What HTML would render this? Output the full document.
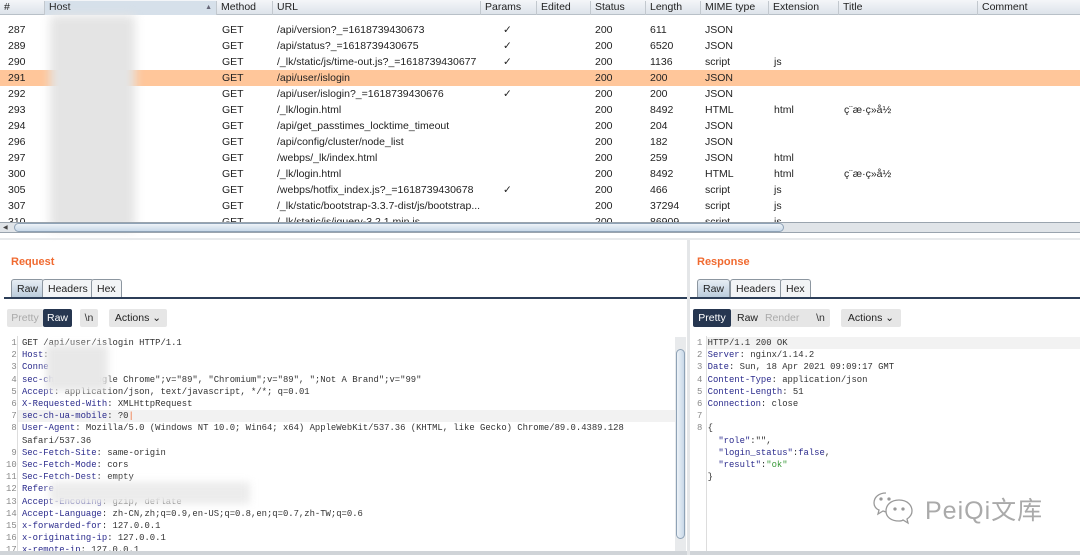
<!DOCTYPE html>
<html><head><meta charset="utf-8"><style>
*{margin:0;padding:0;box-sizing:border-box}
body{width:1080px;height:555px;overflow:hidden;background:#fff;font-family:"Liberation Sans",sans-serif;position:relative}
.abs{position:absolute}
.hdr{position:absolute;top:0;left:0;width:1080px;height:15px;background:linear-gradient(#f4f6f9,#dde3ea);border-bottom:1px solid #b8c0c8}
.hdr span{position:absolute;top:1px;font-size:10.5px;color:#222;height:14px;padding-left:4px;border-left:1px solid #c2c8ce}
.row{position:absolute;left:0;width:1080px;height:16px;font-size:10.5px;color:#222}
.row span{position:absolute;top:2px}
.hl{background:#ffc69a}
.code{position:absolute;font-family:"Liberation Mono",monospace;font-size:8.9px;line-height:12.2px;color:#333;white-space:pre}
.k{color:#2a2a8c}
.n{color:#888}
.btn{position:absolute;height:18px;font-size:10.5px;line-height:18px;text-align:center;border-radius:2px}
.tab{position:absolute;top:279px;height:19px;font-size:10.5px;line-height:18px;border:1px solid #8c96a0;border-bottom:none;border-radius:3px 3px 0 0;background:#f2f4f6;padding:0 5px;color:#222}
</style></head><body>
<div class="hdr">
<span style="left:0;border:none">#</span>
<span style="left:44px;width:172px;background:#d6e0ea">Host<i style="position:absolute;right:4px;top:3px;font-size:7px;font-style:normal;color:#667">▲</i></span>
<span style="left:216px">Method</span>
<span style="left:272px">URL</span>
<span style="left:480px">Params</span>
<span style="left:536px">Edited</span>
<span style="left:590px">Status</span>
<span style="left:645px">Length</span>
<span style="left:700px">MIME type</span>
<span style="left:768px">Extension</span>
<span style="left:838px">Title</span>
<span style="left:977px">Comment</span>
</div>
<div class="row" style="top:22px"><span style="left:8px">287</span><span style="left:222px">GET</span><span style="left:277px">/api/version?_=1618739430673</span><span style="left:503px">✓</span><span style="left:595px">200</span><span style="left:650px">611</span><span style="left:705px">JSON</span></div>
<div class="row" style="top:38px"><span style="left:8px">289</span><span style="left:222px">GET</span><span style="left:277px">/api/status?_=1618739430675</span><span style="left:503px">✓</span><span style="left:595px">200</span><span style="left:650px">6520</span><span style="left:705px">JSON</span></div>
<div class="row" style="top:54px"><span style="left:8px">290</span><span style="left:222px">GET</span><span style="left:277px">/_lk/static/js/time-out.js?_=1618739430677</span><span style="left:503px">✓</span><span style="left:595px">200</span><span style="left:650px">1136</span><span style="left:705px">script</span><span style="left:774px">js</span></div>
<div class="row hl" style="top:70px"><span style="left:8px">291</span><span style="left:222px">GET</span><span style="left:277px">/api/user/islogin</span><span style="left:595px">200</span><span style="left:650px">200</span><span style="left:705px">JSON</span></div>
<div class="row" style="top:86px"><span style="left:8px">292</span><span style="left:222px">GET</span><span style="left:277px">/api/user/islogin?_=1618739430676</span><span style="left:503px">✓</span><span style="left:595px">200</span><span style="left:650px">200</span><span style="left:705px">JSON</span></div>
<div class="row" style="top:102px"><span style="left:8px">293</span><span style="left:222px">GET</span><span style="left:277px">/_lk/login.html</span><span style="left:595px">200</span><span style="left:650px">8492</span><span style="left:705px">HTML</span><span style="left:774px">html</span><span style="left:844px">ç¨æ·ç»å½</span></div>
<div class="row" style="top:118px"><span style="left:8px">294</span><span style="left:222px">GET</span><span style="left:277px">/api/get_passtimes_locktime_timeout</span><span style="left:595px">200</span><span style="left:650px">204</span><span style="left:705px">JSON</span></div>
<div class="row" style="top:134px"><span style="left:8px">296</span><span style="left:222px">GET</span><span style="left:277px">/api/config/cluster/node_list</span><span style="left:595px">200</span><span style="left:650px">182</span><span style="left:705px">JSON</span></div>
<div class="row" style="top:150px"><span style="left:8px">297</span><span style="left:222px">GET</span><span style="left:277px">/webps/_lk/index.html</span><span style="left:595px">200</span><span style="left:650px">259</span><span style="left:705px">JSON</span><span style="left:774px">html</span></div>
<div class="row" style="top:166px"><span style="left:8px">300</span><span style="left:222px">GET</span><span style="left:277px">/_lk/login.html</span><span style="left:595px">200</span><span style="left:650px">8492</span><span style="left:705px">HTML</span><span style="left:774px">html</span><span style="left:844px">ç¨æ·ç»å½</span></div>
<div class="row" style="top:182px"><span style="left:8px">305</span><span style="left:222px">GET</span><span style="left:277px">/webps/hotfix_index.js?_=1618739430678</span><span style="left:503px">✓</span><span style="left:595px">200</span><span style="left:650px">466</span><span style="left:705px">script</span><span style="left:774px">js</span></div>
<div class="row" style="top:198px"><span style="left:8px">307</span><span style="left:222px">GET</span><span style="left:277px">/_lk/static/bootstrap-3.3.7-dist/js/bootstrap...</span><span style="left:595px">200</span><span style="left:650px">37294</span><span style="left:705px">script</span><span style="left:774px">js</span></div>
<div class="row" style="top:214px;height:8px;overflow:hidden"><span style="left:8px">310</span><span style="left:222px">GET</span><span style="left:277px">/_lk/static/js/jquery-3.2.1.min.js</span><span style="left:595px">200</span><span style="left:650px">86909</span><span style="left:705px">script</span><span style="left:774px">js</span></div>
<div class="abs" style="left:50px;top:15px;width:85px;height:215px;background:#e4e4e4;filter:blur(5px)"></div>
<div class="abs" style="left:0;top:222px;width:1080px;height:11px;background:#e0e4e8;border-top:1px solid #9aa4ae;border-bottom:1px solid #9aa4ae"></div>
<div class="abs" style="left:14px;top:223px;width:770px;height:9px;background:linear-gradient(#eef3f8,#c8d8e8);border:1px solid #8ea2b6;border-radius:5px"></div>
<div class="abs" style="left:3px;top:224px;font-size:6px;color:#444">◀</div>
<div class="abs" style="left:0;top:238px;width:1080px;height:2px;background:#e8eaec"></div>
<div class="abs" style="left:687px;top:240px;width:3px;height:315px;background:#e4e6e8"></div>

<!-- Request -->
<div class="abs" style="left:11px;top:256px;font-size:11px;font-weight:bold;color:#f06a30">Request</div>
<div class="tab" style="left:11px;background:linear-gradient(#e6edf4,#b8cadb)">Raw</div>
<div class="tab" style="left:42px">Headers</div>
<div class="tab" style="left:91px">Hex</div>
<div class="abs" style="left:4px;top:297px;width:683px;height:2px;background:#2c3e58"></div>
<div class="btn" style="left:7px;top:309px;width:36px;background:#e6e6e6;color:#aaa">Pretty</div>
<div class="btn" style="left:43px;top:309px;width:29px;background:#263650;color:#fff">Raw</div>
<div class="btn" style="left:80px;top:309px;width:18px;background:#e6e6e6;color:#333">\n</div>
<div class="btn" style="left:109px;top:309px;width:58px;background:#e6e6e6;color:#222">Actions ⌄</div>
<div class="abs" style="left:17px;top:410px;width:658px;height:12px;background:#f2f2f2"></div>
<div class="abs" style="left:17px;top:336px;width:1px;height:216px;background:#ddd"></div>
<div class="code" style="left:6px;top:337px"><span class="n"> 1</span> GET /api/user/islogin HTTP/1.1
<span class="n"> 2</span> <span class="k">Host</span>:
<span class="n"> 3</span> <span class="k">Conne</span>
<span class="n"> 4</span> <span class="k">sec-ch-ua</span>: "Google Chrome";v="89", "Chromium";v="89", ";Not A Brand";v="99"
<span class="n"> 5</span> <span class="k">Accept</span>: application/json, text/javascript, */*; q=0.01
<span class="n"> 6</span> <span class="k">X-Requested-With</span>: XMLHttpRequest
<span class="n"> 7</span> <span class="k">sec-ch-ua-mobile</span>: ?0<span style="color:#f06a30">|</span>
<span class="n"> 8</span> <span class="k">User-Agent</span>: Mozilla/5.0 (Windows NT 10.0; Win64; x64) AppleWebKit/537.36 (KHTML, like Gecko) Chrome/89.0.4389.128
   Safari/537.36
<span class="n"> 9</span> <span class="k">Sec-Fetch-Site</span>: same-origin
<span class="n">10</span> <span class="k">Sec-Fetch-Mode</span>: cors
<span class="n">11</span> <span class="k">Sec-Fetch-Dest</span>: empty
<span class="n">12</span> <span class="k">Refere</span>
<span class="n">13</span> <span class="k">Accept-Encoding</span>: gzip, deflate
<span class="n">14</span> <span class="k">Accept-Language</span>: zh-CN,zh;q=0.9,en-US;q=0.8,en;q=0.7,zh-TW;q=0.6
<span class="n">15</span> <span class="k">x-forwarded-for</span>: 127.0.0.1
<span class="n">16</span> <span class="k">x-originating-ip</span>: 127.0.0.1
<span class="n">17</span> <span class="k">x-remote-ip</span>: 127.0.0.1</div>
<div class="abs" style="left:46px;top:345px;width:62px;height:46px;background:#e8e8e8;filter:blur(4px)"></div>
<div class="abs" style="left:50px;top:482px;width:200px;height:22px;background:#ececec;filter:blur(4px)"></div>
<div class="abs" style="left:675px;top:337px;width:11px;height:216px;background:#e8eaec"></div>
<div class="abs" style="left:676px;top:349px;width:9px;height:190px;background:linear-gradient(90deg,#eef3f8,#c8d8e8);border:1px solid #8ea2b6;border-radius:5px"></div>
<div class="abs" style="left:0;top:551px;width:687px;height:4px;background:#d0d4d8"></div>

<!-- Response -->
<div class="abs" style="left:697px;top:256px;font-size:11px;font-weight:bold;color:#f06a30">Response</div>
<div class="tab" style="left:697px;background:linear-gradient(#e6edf4,#b8cadb)">Raw</div>
<div class="tab" style="left:730px">Headers</div>
<div class="tab" style="left:780px">Hex</div>
<div class="abs" style="left:690px;top:297px;width:390px;height:2px;background:#2c3e58"></div>
<div class="btn" style="left:693px;top:309px;width:38px;background:#263650;color:#fff">Pretty</div>
<div class="btn" style="left:731px;top:309px;width:92px;background:#e6e6e6;color:#222;text-align:left;padding-left:6px">Raw <span style="color:#aaa;margin-left:4px">Render</span></div>
<div class="btn" style="left:811px;top:309px;width:19px;background:#e6e6e6;color:#333">\n</div>
<div class="btn" style="left:841px;top:309px;width:60px;background:#e6e6e6;color:#222">Actions ⌄</div>
<div class="abs" style="left:707px;top:337px;width:373px;height:12px;background:#f2f2f2"></div>
<div class="abs" style="left:706px;top:336px;width:1px;height:216px;background:#ddd"></div>
<div class="code" style="left:697px;top:337px"><span class="n">1</span> HTTP/1.1 200 OK
<span class="n">2</span> <span class="k">Server</span>: nginx/1.14.2
<span class="n">3</span> <span class="k">Date</span>: Sun, 18 Apr 2021 09:09:17 GMT
<span class="n">4</span> <span class="k">Content-Type</span>: application/json
<span class="n">5</span> <span class="k">Content-Length</span>: 51
<span class="n">6</span> <span class="k">Connection</span>: close
<span class="n">7</span>
<span class="n">8</span> {
    <span class="k">"role"</span>:"",
    <span class="k">"login_status"</span>:<span class="k">false</span>,
    <span class="k">"result"</span>:<span style="color:#3a9a3a">"ok"</span>
  }</div>
<svg class="abs" style="left:872px;top:489px" width="48" height="36" viewBox="0 0 48 36" fill="none" stroke="#999" stroke-width="1.3">
<path d="M14 4c-7 0-12 4-12 10 0 3 2 6 5 7l-1 4 5-3c1 0 2 1 3 1"/>
<path d="M27 11c-8 0-13 5-13 11s5 10 13 10c2 0 3 0 4-1l5 3-1-4c3-2 5-5 5-8 0-6-5-11-13-11z"/>
<circle cx="9" cy="10" r="1" fill="#999"/><circle cx="17" cy="10" r="1" fill="#999"/>
<circle cx="23" cy="20" r="1" fill="#999"/><circle cx="31" cy="20" r="1" fill="#999"/>
</svg>
<div class="abs" style="left:925px;top:491px;font-size:25px;color:#aaa;font-family:'Liberation Sans','Noto Sans CJK SC',sans-serif;letter-spacing:1px">PeiQi文库</div>
<div class="abs" style="left:690px;top:551px;width:390px;height:4px;background:#d0d4d8"></div>
</body></html>
